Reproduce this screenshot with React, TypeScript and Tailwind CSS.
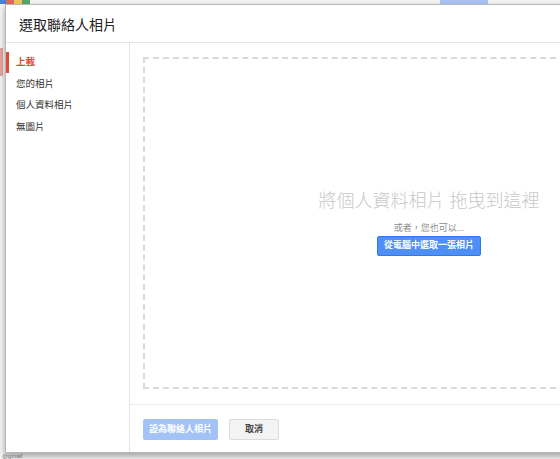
import React from "react";

const font = { fontFamily: '"Liberation Sans", "Noto Sans CJK TC", sans-serif' };

export default function App() {
  return (
    <div
      className="relative w-[560px] h-[459px] overflow-hidden bg-[#f4f4f4]"
      style={font}
    >
      {/* page behind the dialog */}
      <div className="absolute left-0 top-0 w-[30px] h-[4px] flex">
        <div className="w-[6px] h-full bg-[#4a7fd8]" />
        <div className="w-[8px] h-full bg-[#e06b5c]" />
        <div className="w-[8px] h-full bg-[#f2c65a]" />
        <div className="w-[8px] h-full bg-[#5aa66a]" />
      </div>
      <div className="absolute left-[440px] top-0 w-[48px] h-[4px] bg-[#a9c4f4]" />
      <div className="absolute left-0 top-[48px] w-[3px] h-[28px] bg-[#e8a29a]" />
      <div className="absolute left-[2px] top-[453px] text-[6px] leading-[6px] text-[#888]">
        @gmail
      </div>

      {/* dialog */}
      <div className="absolute left-[5px] top-[4px] w-[724px] h-[449px] bg-white border border-[#b8b8b8] shadow-[0_3px_6px_rgba(0,0,0,0.35)] flex flex-col">
        <div className="h-[38px] shrink-0 border-b border-[#e5e5e5] pl-[13px] flex items-center">
          <span className="text-[14px] text-[#222] leading-none pt-[2px]">
            選取聯絡人相片
          </span>
        </div>
        <div className="flex flex-1 min-h-0">
          <div className="w-[124px] shrink-0 border-r border-[#e5e5e5] pt-[9px] flex flex-col text-[9.5px] text-[#333]">
            <div className="h-[21px] flex items-center border-l-[3px] border-[#dd4b39] pl-[7px] text-[#dd4b39] font-bold">
              上載
            </div>
            <div className="h-[21.5px] flex items-center pl-[10px]">您的相片</div>
            <div className="h-[21.5px] flex items-center pl-[10px]">個人資料相片</div>
            <div className="h-[21.5px] flex items-center pl-[10px]">無圖片</div>
          </div>
          <div className="flex-1 flex flex-col min-w-0">
            <div className="flex-1 mx-[13px] mt-[14px] mb-[15px] border-2 border-dashed border-[#dadada] flex flex-col items-center justify-center">
              <div className="text-[18px] leading-[22px] font-light text-[#c8c8c8]">
                將個人資料相片 拖曳到這裡
              </div>
              <div className="mt-[11px] text-[9px] leading-[10px] text-[#8c8c8c]">
                或者，您也可以...
              </div>
              <div className="mt-[3px] h-[20px] px-[6px] flex items-center bg-[#4d8ff5] border border-[#3079ed] rounded-[2px] text-[9px] font-bold text-white">
                從電腦中選取一張相片
              </div>
            </div>
            <div className="h-[48px] shrink-0 border-t border-[#ebebeb] pl-[13px] pt-[14px] flex items-start gap-[11px]">
              <div className="h-[21px] w-[75px] flex items-center justify-center bg-[#a3c3f7] rounded-[2px] text-[9px] font-bold text-white">
                設為聯絡人相片
              </div>
              <div className="h-[21px] w-[50px] flex items-center justify-center bg-[#f3f3f3] border border-[#dcdcdc] rounded-[2px] text-[9px] font-bold text-[#444]">
                取消
              </div>
            </div>
          </div>
        </div>
      </div>
    </div>
  );
}
